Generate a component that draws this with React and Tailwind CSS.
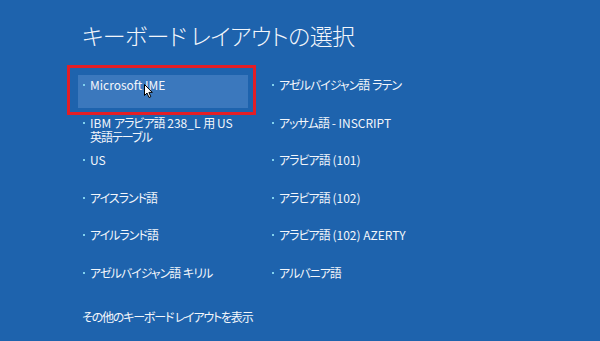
import React from "react"

const leftItems = [
  ["Microsoft IME"],
  ["IBM アラビア語 238_L 用 US", "英語テーブル"],
  ["US"],
  ["アイスランド語"],
  ["アイルランド語"],
  ["アゼルバイジャン語 キリル"],
]

const rightItems = [
  ["アゼルバイジャン語 ラテン"],
  ["アッサム語 - INSCRIPT"],
  ["アラビア語 (101)"],
  ["アラビア語 (102)"],
  ["アラビア語 (102) AZERTY"],
  ["アルバニア語"],
]

// kana in the screenshot are set tighter than Noto's, latin is not
function Jp({ text }) {
  const parts = text.match(/[\x00-\x7f]+|[^\x00-\x7f]+/g) || []
  return parts.map((p, i) =>
    /^[\x00-\x7f]+$/.test(p) ? (
      <span key={i} className="inline-block whitespace-pre">{p}</span>
    ) : (
      <span key={i} className="inline-block whitespace-pre tracking-[-1px]">{p}</span>
    )
  )
}

function Cursor() {
  return (
    <svg className="absolute left-[66px] top-[9px]" width="10" height="15" viewBox="0 0 10 15">
      <path d="M0.5 0.5 L0.5 11.5 L3 9 L5 13.5 L6.8 12.7 L4.9 8.4 L8.3 8.4 Z" fill="#fff" stroke="#000" strokeWidth="1" strokeLinejoin="miter" />
    </svg>
  )
}

function Item({ lines, selected }) {
  return (
    <div className={`relative h-[33px] pl-[5px] pt-[3px] ${selected ? "bg-[#3b78bd]" : ""}`}>
      {selected && (
        <div className="absolute left-[-11px] top-[-10px] w-[189px] h-[50px] border-[3px] border-[#e41e26]"></div>
      )}
      <div className="flex items-start gap-[5px]">
        <span className="mt-[6px] w-[2px] h-[2px] shrink-0 bg-[#7fd0ee]"></span>
        <div className="leading-[14px]">
          {lines.map((l, i) => (
            <p key={i}><Jp text={l} /></p>
          ))}
        </div>
      </div>
      {selected && <Cursor />}
    </div>
  )
}

export default function App() {
  return (
    <main className="w-[600px] h-[341px] overflow-hidden bg-[#1e63ad] text-[#f3f6fb] font-['Noto_Sans_CJK_JP',sans-serif] [font-feature-settings:'palt']">
      <h1 className="pl-[82px] pt-[21px] text-[23px] leading-[28px] font-light tracking-[-0.6px]">
        キーボード レイアウトの選択
      </h1>
      <div className="flex gap-[19px] pl-[78px] pt-[26px] text-[12px]">
        <div className="w-[170px] flex flex-col gap-[4.6px]">
          {leftItems.map((lines, i) => (
            <Item key={i} lines={lines} selected={i === 0} />
          ))}
        </div>
        <div className="w-[170px] flex flex-col gap-[4.6px]">
          {rightItems.map((lines, i) => (
            <Item key={i} lines={lines} />
          ))}
        </div>
      </div>
      <p className="pl-[82px] pt-[14px] text-[12px] leading-[14px] tracking-[-1.2px]">
        その他のキーボード レイアウトを表示
      </p>
    </main>
  )
}
